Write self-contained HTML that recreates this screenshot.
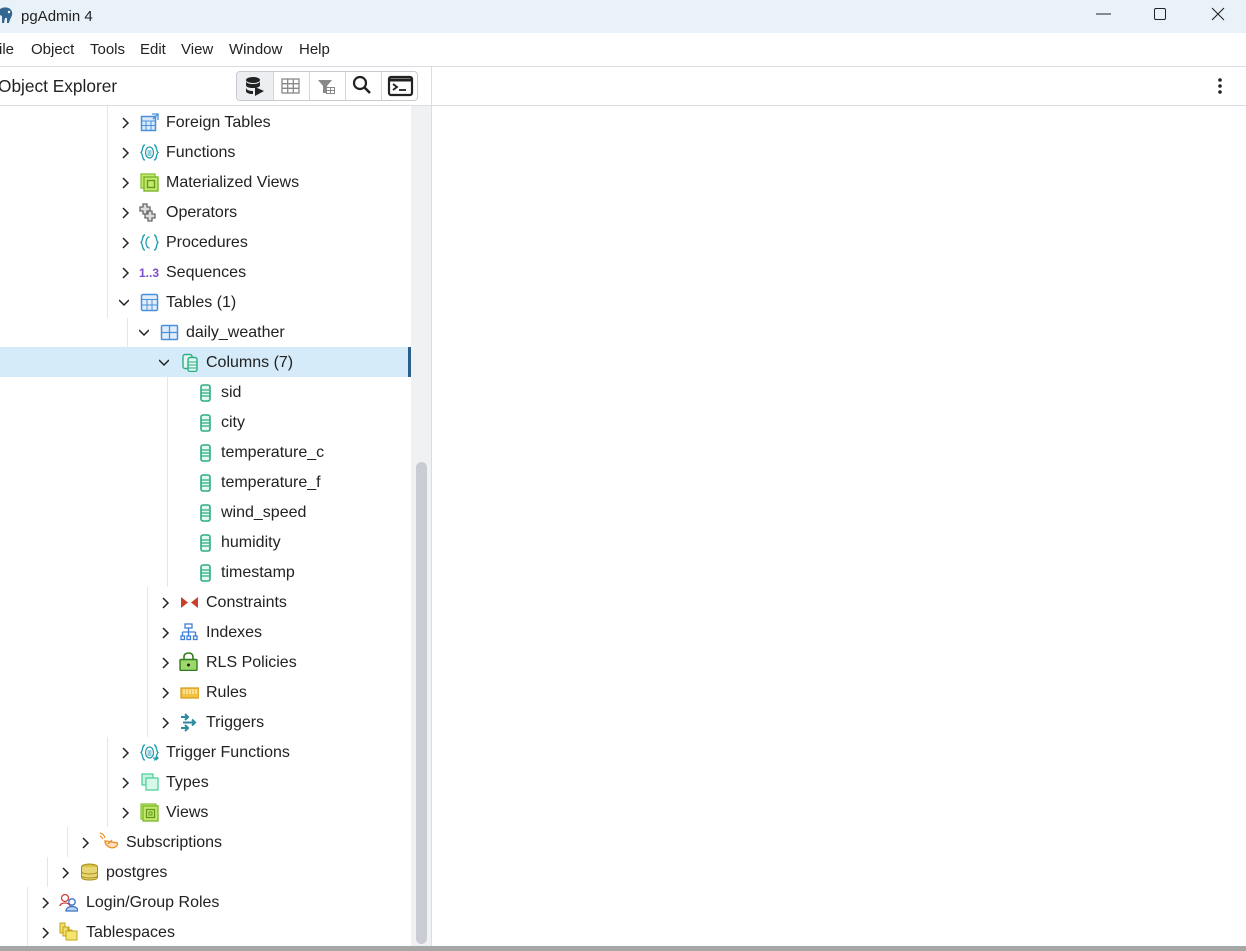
<!DOCTYPE html>
<html><head><meta charset="utf-8"><style>
*{margin:0;padding:0;box-sizing:border-box}
body{width:1246px;height:951px;overflow:hidden;background:#fff;font-family:"Liberation Sans",sans-serif;color:#222;position:relative}
.abs{position:absolute}
.t{position:absolute;font-size:16px;line-height:30px;height:30px;white-space:nowrap;color:#222;transform:translateY(1px)}
.ch{position:absolute;width:10px;height:12px}
.ic{position:absolute;width:19px;height:19px}
.vl{position:absolute;width:1px;background:#e4e6ea}
</style></head><body>
<!-- title bar -->
<div class="abs" style="left:0;top:0;width:1246px;height:33px;background:#eaf2f9"></div>
<svg class="abs" style="left:0;top:6px" width="14" height="20" viewBox="0 0 14 20"><path d="M0 3 C4 0 11 1 12 6 C13 10 10 12 9 17 L7 17 L7 12 L5 12 L4 17 L2 17 L2 10 L0 9Z" fill="#336791"/><circle cx="9" cy="6" r="1.2" fill="#fff"/></svg>
<div class="t" style="left:21px;top:0;line-height:31px;font-size:15px">pgAdmin 4</div>
<svg class="abs" style="left:1094px;top:6px" width="140" height="20"><path d="M2 8H17" stroke="#222" stroke-width="1"/><rect x="60.5" y="2.5" width="11" height="11" rx="1.5" fill="none" stroke="#222"/><path d="M118 2L130 14M130 2L118 14" stroke="#222" stroke-width="1.1"/></svg>
<!-- menu -->
<div class="abs" style="left:0;top:66px;width:1246px;height:1px;background:#dcdde2"></div>
<div class="t" style="left:-1px;top:34px;font-size:15px">ile</div>
<div class="t" style="left:31px;top:34px;font-size:15px">Object</div>
<div class="t" style="left:90px;top:34px;font-size:15px">Tools</div>
<div class="t" style="left:140px;top:34px;font-size:15px">Edit</div>
<div class="t" style="left:181px;top:34px;font-size:15px">View</div>
<div class="t" style="left:229px;top:34px;font-size:15px">Window</div>
<div class="t" style="left:299px;top:34px;font-size:15px">Help</div>
<!-- explorer header -->
<div class="abs" style="left:0;top:105px;width:1246px;height:1px;background:#dcdde2"></div>
<div class="abs" style="left:431px;top:67px;width:1px;height:879px;background:#dcdde2"></div>
<div class="t" style="left:-2px;top:70px;font-size:17.3px">Object Explorer</div>
<div class="abs" style="left:236px;top:71px;width:182px;height:30px;border:1px solid #c8cad0;border-radius:4px;background:#fff"></div>
<div class="abs" style="left:237px;top:72px;width:36px;height:28px;background:#eceef1;border-radius:3px 0 0 3px"></div>
<div class="abs" style="left:273px;top:72px;width:1px;height:28px;background:#d4d6db"></div>
<div class="abs" style="left:309px;top:72px;width:1px;height:28px;background:#d4d6db"></div>
<div class="abs" style="left:345px;top:72px;width:1px;height:28px;background:#d4d6db"></div>
<div class="abs" style="left:381px;top:72px;width:1px;height:28px;background:#d4d6db"></div>
<svg class="abs" style="left:236px;top:71px" width="182" height="30">
<ellipse cx="17" cy="9" rx="7" ry="3" fill="#222"/><path d="M10 10v4c0 2 3 3 7 3s7-1 7-3v-4c0 2-3 3-7 3s-7-1-7-3z M10 16v4c0 2 3 3 7 3l0-3c-4 0-7-1-7-4z" fill="#222"/><path d="M19 16L28 20L19 25Z" fill="#222"/>
<g fill="none" stroke="#888" stroke-width="1.3"><rect x="46" y="8" width="17" height="14"/><path d="M46 12.7H63M46 17.3H63M51.7 8V22M57.3 8V22"/></g>
<path d="M82 9H96L91 15V22H87V15Z" fill="#888"/><g fill="none" stroke="#888" stroke-width="1"><rect x="90.5" y="16.5" width="8" height="6"/><path d="M90.5 19.5H98.5M94.5 16.5V22.5"/></g>
<circle cx="124" cy="12" r="6" fill="none" stroke="#222" stroke-width="2.2"/><path d="M128.5 16.5L134 22" stroke="#222" stroke-width="2.6"/>
<rect x="153" y="6" width="23" height="18" rx="2" fill="none" stroke="#222" stroke-width="2.2"/><path d="M153 9H176" stroke="#222" stroke-width="3"/><path d="M157 13L161 16L157 19" fill="none" stroke="#222" stroke-width="1.8"/><path d="M163 19H170" stroke="#222" stroke-width="1.8"/>
</svg>
<svg class="abs" style="left:1216px;top:77px" width="8" height="18"><circle cx="4" cy="3" r="1.8" fill="#222"/><circle cx="4" cy="9" r="1.8" fill="#222"/><circle cx="4" cy="15" r="1.8" fill="#222"/></svg>
<!-- scrollbar -->
<div class="abs" style="left:411px;top:106px;width:20px;height:840px;background:#f0f1f3"></div>
<div class="abs" style="left:416px;top:462px;width:11px;height:482px;background:#c9ccd3;border-radius:6px"></div>
<!-- selected -->
<div class="abs" style="left:0;top:347px;width:411px;height:30px;background:#d5ebf9"></div>
<div class="abs" style="left:408px;top:347px;width:3px;height:30px;background:#2c5f8a"></div>
<!-- guide lines -->
<div class="vl" style="left:107px;top:106px;height:212px"></div>
<div class="vl" style="left:127px;top:318px;height:30px"></div>
<div class="vl" style="left:147px;top:347px;height:30px"></div>
<div class="vl" style="left:167px;top:377px;height:210px"></div>
<div class="vl" style="left:147px;top:587px;height:150px"></div>
<div class="vl" style="left:107px;top:737px;height:90px"></div>
<div class="vl" style="left:67px;top:827px;height:30px"></div>
<div class="vl" style="left:47px;top:857px;height:30px"></div>
<div class="vl" style="left:27px;top:887px;height:59px"></div>

<svg width="0" height="0" style="position:absolute"><defs>
<path id="cr" d="M2 1L7 6L2 11" fill="none" stroke="#222" stroke-width="1.5"/>
<path id="cd" d="M0 3L5 8L10 3" fill="none" stroke="#222" stroke-width="1.5"/>
<g id="col"><rect x="5" y="2" width="9" height="16" rx="2" fill="#e6f7f1" stroke="#2bae86" stroke-width="1.6"/><path d="M5 7H14M5 10H14M5 13H14" stroke="#2bae86" stroke-width="1.2"/></g>
</defs></svg>

<!-- rows: chevrons -->
<svg class="ch" style="left:121px;top:117px"><use href="#cr"/></svg>
<svg class="ch" style="left:121px;top:147px"><use href="#cr"/></svg>
<svg class="ch" style="left:121px;top:177px"><use href="#cr"/></svg>
<svg class="ch" style="left:121px;top:207px"><use href="#cr"/></svg>
<svg class="ch" style="left:121px;top:237px"><use href="#cr"/></svg>
<svg class="ch" style="left:121px;top:267px"><use href="#cr"/></svg>
<svg class="ch" style="left:119px;top:297px"><use href="#cd"/></svg>
<svg class="ch" style="left:139px;top:327px"><use href="#cd"/></svg>
<svg class="ch" style="left:159px;top:357px"><use href="#cd"/></svg>
<svg class="ch" style="left:161px;top:597px"><use href="#cr"/></svg>
<svg class="ch" style="left:161px;top:627px"><use href="#cr"/></svg>
<svg class="ch" style="left:161px;top:657px"><use href="#cr"/></svg>
<svg class="ch" style="left:161px;top:687px"><use href="#cr"/></svg>
<svg class="ch" style="left:161px;top:717px"><use href="#cr"/></svg>
<svg class="ch" style="left:121px;top:747px"><use href="#cr"/></svg>
<svg class="ch" style="left:121px;top:777px"><use href="#cr"/></svg>
<svg class="ch" style="left:121px;top:807px"><use href="#cr"/></svg>
<svg class="ch" style="left:81px;top:837px"><use href="#cr"/></svg>
<svg class="ch" style="left:61px;top:867px"><use href="#cr"/></svg>
<svg class="ch" style="left:41px;top:897px"><use href="#cr"/></svg>
<svg class="ch" style="left:41px;top:927px"><use href="#cr"/></svg>

<!-- icons -->
<svg class="ic" style="left:140px;top:113px"><rect x="1.5" y="3.5" width="14" height="14" fill="#d8ebfb" stroke="#4a90d9" stroke-width="1.5"/><path d="M1.5 8H15.5M1.5 12.5H15.5M6 8V17.5M11 8V17.5" stroke="#4a90d9"/><path d="M12 1H18V7M18 1L13 6" fill="none" stroke="#4a90d9" stroke-width="1.3"/></svg>
<svg class="ic" style="left:140px;top:143px"><path d="M5 2C2 2 3 8 1 9.5C3 11 2 17 5 17M14 2C17 2 16 8 18 9.5C16 11 17 17 14 17" fill="none" stroke="#2a9fb0" stroke-width="1.4"/><ellipse cx="9.5" cy="9.5" rx="4" ry="5.5" fill="none" stroke="#2a9fb0" stroke-width="1.3"/><path d="M7.5 8H11.5M7.5 10H11.5M7.5 12H11.5" stroke="#2a9fb0"/></svg>
<svg class="ic" style="left:140px;top:173px"><rect x="1" y="1" width="14" height="14" fill="#c6e86a" stroke="#8cc63f" stroke-width="1.4"/><rect x="4" y="4" width="14" height="14" fill="#c6e86a" stroke="#7ab52c" stroke-width="1.4"/><rect x="7.5" y="7.5" width="7" height="7" fill="none" stroke="#5e9a1e" stroke-width="1.4"/></svg>
<svg class="ic" style="left:139px;top:203px"><path d="M4 1H8V4H11V8H8V11H4V8H1V4H4Z M9 8H13V11H16V15H13V18H9V15H6V11H9Z" fill="#ddd" stroke="#666" stroke-width="1.3"/></svg>
<svg class="ic" style="left:140px;top:233px"><path d="M5 2C2 2 3 8 1 9.5C3 11 2 17 5 17M14 2C17 2 16 8 18 9.5C16 11 17 17 14 17" fill="none" stroke="#2a9fb0" stroke-width="1.4"/><path d="M9.5 4C7 4 6 7 6 9.5C6 12 7 15 9.5 15" fill="none" stroke="#2a9fb0" stroke-width="1.3"/></svg>
<div class="t" style="left:139px;top:257px;font-size:12px;color:#7a4fc8;font-weight:bold">1..3</div>
<svg class="ic" style="left:140px;top:293px"><rect x="1.5" y="1.5" width="16" height="16" rx="1.5" fill="#e0eefc" stroke="#4a90d9" stroke-width="1.5"/><path d="M1.5 6.5H17.5M1.5 12H17.5M7 6.5V17.5M12 6.5V17.5" stroke="#4a90d9"/></svg>
<svg class="ic" style="left:160px;top:323px"><rect x="1.5" y="2.5" width="16" height="14" rx="1" fill="#e0eefc" stroke="#4a90d9" stroke-width="1.5"/><path d="M1.5 9.5H17.5M9.5 2.5V16.5" stroke="#4a90d9" stroke-width="1.3"/></svg>
<svg class="ic" style="left:181px;top:353px"><rect x="2" y="1.5" width="9" height="14" rx="2" fill="#e6f7f1" stroke="#2bae86" stroke-width="1.4"/><rect x="7" y="4.5" width="9" height="14" rx="2" fill="#e6f7f1" stroke="#2bae86" stroke-width="1.4"/><path d="M7 9H16M7 12H16M7 15H16" stroke="#2bae86"/></svg>
<svg class="ic" style="left:196px;top:383px"><use href="#col"/></svg>
<svg class="ic" style="left:196px;top:413px"><use href="#col"/></svg>
<svg class="ic" style="left:196px;top:443px"><use href="#col"/></svg>
<svg class="ic" style="left:196px;top:473px"><use href="#col"/></svg>
<svg class="ic" style="left:196px;top:503px"><use href="#col"/></svg>
<svg class="ic" style="left:196px;top:533px"><use href="#col"/></svg>
<svg class="ic" style="left:196px;top:563px"><use href="#col"/></svg>
<svg class="ic" style="left:180px;top:593px"><path d="M1 4L8 9.5L1 15Z" fill="#c8402a"/><path d="M18 4L11 9.5L18 15Z" fill="#c8402a"/></svg>
<svg class="ic" style="left:180px;top:623px"><g fill="none" stroke="#3f7fd6" stroke-width="1.3"><rect x="5" y="1" width="7" height="4"/><path d="M8.5 5V9M2.5 9H15.5M2.5 9V13M8.5 9V13M15.5 9V13"/><rect x="1" y="13" width="3.5" height="3.5"/><rect x="7" y="13" width="3.5" height="3.5"/><rect x="13.5" y="13" width="3.5" height="3.5"/></g></svg>
<svg class="ic" style="left:179px;top:652px"><path d="M5 8V5C5 2 7 1 9.5 1S14 2 14 5V8" fill="none" stroke="#2f7d1e" stroke-width="1.6"/><rect x="1" y="7.5" width="17" height="11" rx="1" fill="#9fd86a" stroke="#2f7d1e" stroke-width="1.4"/><circle cx="9.5" cy="13" r="1.5" fill="#222"/></svg>
<svg class="ic" style="left:180px;top:683px"><rect x="1" y="5" width="18" height="10" fill="#f3c242" stroke="#d49a16" stroke-width="1.2"/><path d="M4 6V11M7 6V11M10 6V11M13 6V11M16 6V11" stroke="#fff3c8" stroke-width="1.2"/></svg>
<svg class="ic" style="left:180px;top:713px"><path d="M1 4H8M5 1L8 4L5 7M1 15H8M5 12L8 15L5 18M3 9.5H15M12 6.5L15 9.5L12 12.5" fill="none" stroke="#2a8aa0" stroke-width="2"/></svg>
<svg class="ic" style="left:140px;top:743px"><path d="M5 2C2 2 3 8 1 9.5C3 11 2 17 5 17M14 2C17 2 16 8 18 9.5C16 11 17 17 14 17" fill="none" stroke="#2a9fb0" stroke-width="1.4"/><ellipse cx="9.5" cy="9.5" rx="4" ry="5.5" fill="none" stroke="#2a9fb0" stroke-width="1.3"/><path d="M7.5 8H11.5M7.5 10H11.5M7.5 12H11.5" stroke="#2a9fb0"/><path d="M13 15H18M16 13L18 15L16 17" stroke="#2a9fb0" fill="none" stroke-width="1.3"/></svg>
<svg class="ic" style="left:141px;top:773px"><rect x="1" y="1" width="11" height="11" fill="#c8f2df" stroke="#4fd19b" stroke-width="1.3"/><rect x="5" y="5" width="12" height="12" fill="#d9f7ea" stroke="#4fd19b" stroke-width="1.3"/></svg>
<svg class="ic" style="left:140px;top:803px"><rect x="1" y="1" width="15" height="15" fill="#c6e86a" stroke="#8cc63f" stroke-width="1.3"/><rect x="3" y="3" width="15" height="15" fill="#c6e86a" stroke="#7ab52c" stroke-width="1.3"/><rect x="6.5" y="6.5" width="8" height="8" fill="none" stroke="#5e9a1e" stroke-width="1.3"/><rect x="9" y="9" width="3" height="3" fill="none" stroke="#5e9a1e"/></svg>
<svg class="ic" style="left:99px;top:832px"><path d="M6 9C6 16 17 19 19 11Z" fill="#fde2c4" stroke="#f0922e" stroke-width="1.4"/><path d="M9 12L13 8" stroke="#f0922e" stroke-width="1.3"/><path d="M1 1C4 2 5 3 6 6M1 4C3 5 3 6 4 7" fill="none" stroke="#f0922e" stroke-width="1.2"/></svg>
<svg class="ic" style="left:80px;top:863px"><ellipse cx="9.5" cy="4" rx="8" ry="3" fill="#d8c246" stroke="#a89018"/><path d="M1.5 4V14C1.5 16 5 17 9.5 17S17.5 16 17.5 14V4" fill="#e8d674" stroke="#a89018"/><path d="M1.5 8.5C1.5 10 5 11 9.5 11S17.5 10 17.5 8.5M1.5 12.5C1.5 14 5 15 9.5 15S17.5 14 17.5 12.5" fill="none" stroke="#a89018"/></svg>
<svg class="ic" style="left:59px;top:893px"><circle cx="6" cy="5" r="3.5" fill="#fff" stroke="#d04040" stroke-width="1.3"/><path d="M1 13C1 9 11 9 11 13" fill="#fff" stroke="#d04040" stroke-width="1.3"/><circle cx="13" cy="9" r="3.2" fill="#fff" stroke="#3a72c4" stroke-width="1.3"/><path d="M7 18C7 12 19 12 19 18Z" fill="#bcd4f4" stroke="#3a72c4" stroke-width="1.3"/></svg>
<svg class="ic" style="left:59px;top:922px"><path d="M1 1H6V5H10V11H1Z" fill="#f2e06a" stroke="#c4a21c"/><path d="M4 5H9V8H13V14H4Z" fill="#f2e06a" stroke="#c4a21c"/><rect x="7" y="9" width="11" height="9" fill="#f5e56e" stroke="#c4a21c"/></svg>

<!-- labels -->
<div class="t" style="left:166px;top:107px">Foreign Tables</div>
<div class="t" style="left:166px;top:137px">Functions</div>
<div class="t" style="left:166px;top:167px">Materialized Views</div>
<div class="t" style="left:166px;top:197px">Operators</div>
<div class="t" style="left:166px;top:227px">Procedures</div>
<div class="t" style="left:166px;top:257px">Sequences</div>
<div class="t" style="left:166px;top:287px">Tables (1)</div>
<div class="t" style="left:186px;top:317px">daily_weather</div>
<div class="t" style="left:206px;top:347px">Columns (7)</div>
<div class="t" style="left:221px;top:377px">sid</div>
<div class="t" style="left:221px;top:407px">city</div>
<div class="t" style="left:221px;top:437px">temperature_c</div>
<div class="t" style="left:221px;top:467px">temperature_f</div>
<div class="t" style="left:221px;top:497px">wind_speed</div>
<div class="t" style="left:221px;top:527px">humidity</div>
<div class="t" style="left:221px;top:557px">timestamp</div>
<div class="t" style="left:206px;top:587px">Constraints</div>
<div class="t" style="left:206px;top:617px">Indexes</div>
<div class="t" style="left:206px;top:647px">RLS Policies</div>
<div class="t" style="left:206px;top:677px">Rules</div>
<div class="t" style="left:206px;top:707px">Triggers</div>
<div class="t" style="left:166px;top:737px">Trigger Functions</div>
<div class="t" style="left:166px;top:767px">Types</div>
<div class="t" style="left:166px;top:797px">Views</div>
<div class="t" style="left:126px;top:827px">Subscriptions</div>
<div class="t" style="left:106px;top:857px">postgres</div>
<div class="t" style="left:86px;top:887px">Login/Group Roles</div>
<div class="t" style="left:86px;top:917px">Tablespaces</div>

<!-- bottom edge -->
<div class="abs" style="left:0;top:946px;width:1246px;height:5px;background:#a6a6a6"></div>
</body></html>
